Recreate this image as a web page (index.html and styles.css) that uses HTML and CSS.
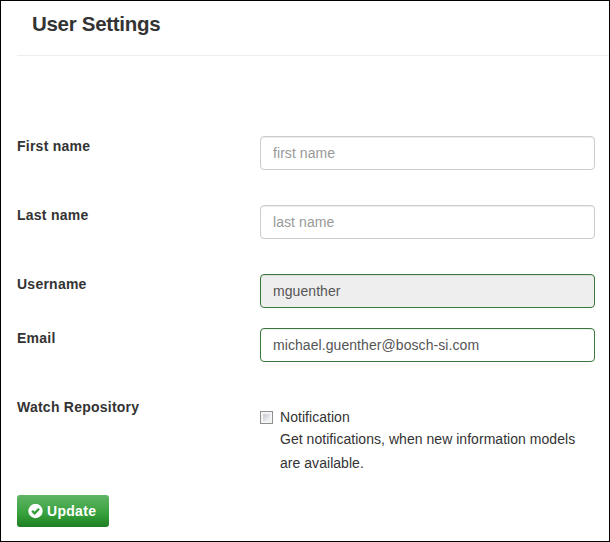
FILE: index.html
```html
<!DOCTYPE html>
<html lang="en">
<head>
<meta charset="utf-8">
<title>User Settings</title>
<link rel="stylesheet" href="styles.css">
</head>
<body>
<main class="page">
  <h1 class="title">User Settings</h1>
  <form class="form">
    <div class="row spaced"><label for="first">First name</label><input id="first" class="control" type="text" placeholder="first name"></div>
    <div class="row spaced"><label for="last">Last name</label><input id="last" class="control" type="text" placeholder="last name"></div>
    <div class="row"><label for="user">Username</label><input id="user" class="control valid" type="text" value="mguenther" disabled></div>
    <div class="row spaced"><label for="email">Email</label><input id="email" class="control valid" type="text" value="michael.guenther@bosch-si.com"></div>
    <div class="row watch"><span class="label">Watch Repository</span>
      <div class="check"><input id="notify" class="box" type="checkbox"><div><label class="name" for="notify">Notification</label><p class="hint">Get notifications, when new information models are available.</p></div></div>
    </div>
    <button class="update" type="button"><svg class="icon" viewBox="0 0 15 15"><circle cx="7.5" cy="7" r="7.2" fill="#fff"/><path d="M4.1 6.9 6.7 9.4 11 4.7" fill="none" stroke="#35a03b" stroke-width="2.4"/></svg>Update</button>
  </form>
</main>
</body>
</html>
```
FILE: styles.css
```css
* { box-sizing: border-box; }
body { margin: 0; font: 14px/20px "Liberation Sans", Arial, sans-serif; color: #333; background: #fff; }
.page { height: 542px; border: 1px solid #000; padding: 0 0 0 16px; }
.title { margin: 0; height: 55px; padding: 12px 0 0 15px; border-bottom: 1px solid #eee; font-size: 20.5px; line-height: 22px; font-weight: bold; letter-spacing: -0.3px; }
.form { padding-top: 80px; }
.row { display: grid; grid-template-columns: 243px 335px; margin-bottom: 20px; align-items: start; font-weight: bold; letter-spacing: .24px; }
.spaced { margin-bottom: 35px; }
.control { height: 34px; width: 335px; margin: 0; padding: 6px 12px; border: 1px solid #ccc; border-radius: 4px; background: #fff; font: 14px/20px "Liberation Sans", Arial, sans-serif; letter-spacing: .07px; color: #555; box-shadow: inset 0 1px 1px rgba(0,0,0,.075); }
.control::placeholder { color: #999; opacity: 1; }
.valid { border-color: #3c763d; }
.control:disabled { background: #eee; }
.check { display: flex; gap: 7px; padding-top: 9px; font-weight: normal; letter-spacing: .04px; }
.name { display: block; line-height: 23px; }
.hint { margin: -1px 0 0; line-height: 23.5px; }
.box { appearance: none; flex: none; width: 13px; height: 13px; margin: 5px 0 0; border: 1px solid #8e8f8f; background: linear-gradient(135deg, #c3c8d0, #f6f6f6) 2px 2px / 7px 7px no-repeat #f4f4f4; }
.update { display: flex; align-items: center; gap: 4px; width: 92px; height: 32px; padding: 0 11px; border: 0; border-radius: 3px; background: linear-gradient(#62b567, #35a03b 60%, #1e7e22); color: #fff; font: bold 14px/20px "Liberation Sans", Arial, sans-serif; letter-spacing: .3px; }
.icon { width: 15px; height: 15px; flex: none; }
```
